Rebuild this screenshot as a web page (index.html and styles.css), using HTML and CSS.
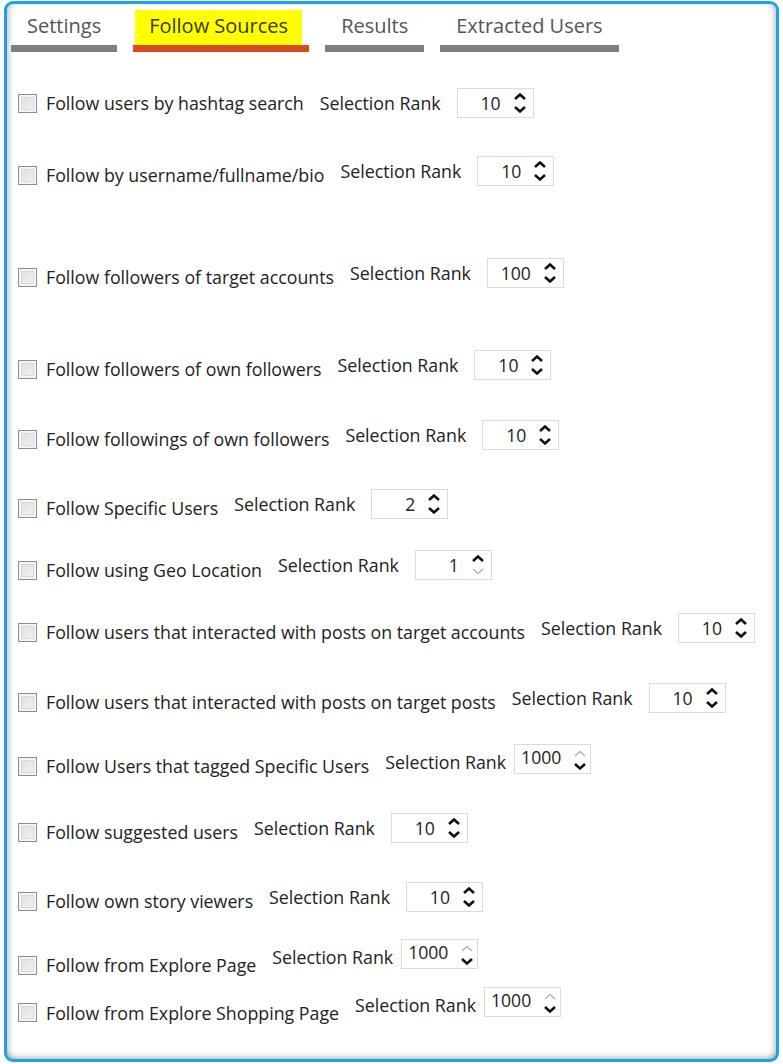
FILE: index.html
```html
<!DOCTYPE html>
<html>
<head>
<meta charset="utf-8">
<link rel="stylesheet" href="styles.css">
</head>
<body>
<div class="panel">
  <div class="tabs">
    <div class="tab"><span class="tab-text">Settings</span><span class="bar"></span></div>
    <div class="tab active"><span class="tab-text"><span class="hl">Follow Sources</span></span><span class="bar"></span></div>
    <div class="tab"><span class="tab-text">Results</span><span class="bar"></span></div>
    <div class="tab"><span class="tab-text">Extracted Users</span><span class="bar"></span></div>
  </div>
  <div class="rows">
    <div class="row"><div class="opt"><span class="cb"></span><span class="lbl">Follow users by hashtag search</span></div><span class="sr">Selection Rank</span><div class="spin"><span class="val">10</span><span class="arrows"><svg class="up" viewBox="0 0 12 7"><path d="M1 6L6 1.5L11 6"/></svg><svg class="dn" viewBox="0 0 12 7"><path d="M1 1L6 5.5L11 1"/></svg></span></div></div>
    <div class="row"><div class="opt"><span class="cb"></span><span class="lbl">Follow by username/fullname/bio</span></div><span class="sr">Selection Rank</span><div class="spin"><span class="val">10</span><span class="arrows"><svg class="up" viewBox="0 0 12 7"><path d="M1 6L6 1.5L11 6"/></svg><svg class="dn" viewBox="0 0 12 7"><path d="M1 1L6 5.5L11 1"/></svg></span></div></div>
    <div class="row"><div class="opt"><span class="cb"></span><span class="lbl">Follow followers of target accounts</span></div><span class="sr">Selection Rank</span><div class="spin"><span class="val">100</span><span class="arrows"><svg class="up" viewBox="0 0 12 7"><path d="M1 6L6 1.5L11 6"/></svg><svg class="dn" viewBox="0 0 12 7"><path d="M1 1L6 5.5L11 1"/></svg></span></div></div>
    <div class="row"><div class="opt"><span class="cb"></span><span class="lbl">Follow followers of own followers</span></div><span class="sr">Selection Rank</span><div class="spin"><span class="val">10</span><span class="arrows"><svg class="up" viewBox="0 0 12 7"><path d="M1 6L6 1.5L11 6"/></svg><svg class="dn" viewBox="0 0 12 7"><path d="M1 1L6 5.5L11 1"/></svg></span></div></div>
    <div class="row"><div class="opt"><span class="cb"></span><span class="lbl">Follow followings of own followers</span></div><span class="sr">Selection Rank</span><div class="spin"><span class="val">10</span><span class="arrows"><svg class="up" viewBox="0 0 12 7"><path d="M1 6L6 1.5L11 6"/></svg><svg class="dn" viewBox="0 0 12 7"><path d="M1 1L6 5.5L11 1"/></svg></span></div></div>
    <div class="row"><div class="opt"><span class="cb"></span><span class="lbl">Follow Specific Users</span></div><span class="sr">Selection Rank</span><div class="spin"><span class="val">2</span><span class="arrows"><svg class="up" viewBox="0 0 12 7"><path d="M1 6L6 1.5L11 6"/></svg><svg class="dn" viewBox="0 0 12 7"><path d="M1 1L6 5.5L11 1"/></svg></span></div></div>
    <div class="row"><div class="opt"><span class="cb"></span><span class="lbl">Follow using Geo Location</span></div><span class="sr">Selection Rank</span><div class="spin"><span class="val">1</span><span class="arrows"><svg class="up" viewBox="0 0 12 7"><path d="M1 6L6 1.5L11 6"/></svg><svg class="dn off" viewBox="0 0 12 7"><path d="M1 1L6 5.5L11 1"/></svg></span></div></div>
    <div class="row"><div class="opt"><span class="cb"></span><span class="lbl">Follow users that interacted with posts on target accounts</span></div><span class="sr">Selection Rank</span><div class="spin"><span class="val">10</span><span class="arrows"><svg class="up" viewBox="0 0 12 7"><path d="M1 6L6 1.5L11 6"/></svg><svg class="dn" viewBox="0 0 12 7"><path d="M1 1L6 5.5L11 1"/></svg></span></div></div>
    <div class="row"><div class="opt"><span class="cb"></span><span class="lbl">Follow users that interacted with posts on target posts</span></div><span class="sr">Selection Rank</span><div class="spin"><span class="val">10</span><span class="arrows"><svg class="up" viewBox="0 0 12 7"><path d="M1 6L6 1.5L11 6"/></svg><svg class="dn" viewBox="0 0 12 7"><path d="M1 1L6 5.5L11 1"/></svg></span></div></div>
    <div class="row wide"><div class="opt"><span class="cb"></span><span class="lbl">Follow Users that tagged Specific Users</span></div><span class="sr">Selection Rank</span><div class="spin"><span class="val">1000</span><span class="arrows"><svg class="up off" viewBox="0 0 12 7"><path d="M1 6L6 1.5L11 6"/></svg><svg class="dn" viewBox="0 0 12 7"><path d="M1 1L6 5.5L11 1"/></svg></span></div></div>
    <div class="row"><div class="opt"><span class="cb"></span><span class="lbl">Follow suggested users</span></div><span class="sr">Selection Rank</span><div class="spin"><span class="val">10</span><span class="arrows"><svg class="up" viewBox="0 0 12 7"><path d="M1 6L6 1.5L11 6"/></svg><svg class="dn" viewBox="0 0 12 7"><path d="M1 1L6 5.5L11 1"/></svg></span></div></div>
    <div class="row"><div class="opt"><span class="cb"></span><span class="lbl">Follow own story viewers</span></div><span class="sr">Selection Rank</span><div class="spin"><span class="val">10</span><span class="arrows"><svg class="up" viewBox="0 0 12 7"><path d="M1 6L6 1.5L11 6"/></svg><svg class="dn" viewBox="0 0 12 7"><path d="M1 1L6 5.5L11 1"/></svg></span></div></div>
    <div class="row wide"><div class="opt"><span class="cb"></span><span class="lbl">Follow from Explore Page</span></div><span class="sr">Selection Rank</span><div class="spin"><span class="val">1000</span><span class="arrows"><svg class="up off" viewBox="0 0 12 7"><path d="M1 6L6 1.5L11 6"/></svg><svg class="dn" viewBox="0 0 12 7"><path d="M1 1L6 5.5L11 1"/></svg></span></div></div>
    <div class="row wide"><div class="opt"><span class="cb"></span><span class="lbl">Follow from Explore Shopping Page</span></div><span class="sr">Selection Rank</span><div class="spin"><span class="val">1000</span><span class="arrows"><svg class="up off" viewBox="0 0 12 7"><path d="M1 6L6 1.5L11 6"/></svg><svg class="dn" viewBox="0 0 12 7"><path d="M1 1L6 5.5L11 1"/></svg></span></div></div>
  </div>
</div>
</body>
</html>
```

FILE: styles.css
```css
html, body {
  margin: 0;
  padding: 0;
  background: #ffffff;
}
body {
  font-family: "Open Sans", "Noto Sans", sans-serif;
  color: #2a2a2a;
}
.panel {
  box-sizing: border-box;
  margin: 1px 0 0 4px;
  width: 775px;
  height: 1061px;
  border: 3px solid #1ba3e6;
  border-radius: 9px;
  background: #ffffff;
  box-shadow: inset 5px 0 6px -3px rgba(0,0,0,0.22), inset -5px 0 6px -3px rgba(0,0,0,0.22), inset 0 -5px 6px -3px rgba(0,0,0,0.22);
  padding: 6px 0 0 4px;
}
.tabs {
  display: flex;
  gap: 16px;
}
.tab {
  display: flex;
  flex-direction: column;
}
.tab-text {
  height: 35px;
  display: flex;
  align-items: flex-start;
  justify-content: center;
  padding: 0 16px;
  font-size: 20px;
  line-height: 31px;
  color: #555555;
}
.tab.active .tab-text {
  padding: 0 7px 0 2px;
  color: #3a3a1a;
}
.hl {
  display: block;
  background: #ffff00;
  height: 35px;
  padding: 0 14px;
}
.bar {
  height: 7px;
  background: #7f7f7f;
}
.tab.active .bar {
  background: #d94a1c;
}
.rows {
  display: flex;
  flex-direction: column;
  padding-left: 7px;
}
.row {
  display: flex;
  align-items: center;
  height: 30px;
  font-size: 17.8px;
}
.opt {
  display: flex;
  align-items: center;
  gap: 9px;
  margin-top: 8px;
}
.cb {
  box-sizing: border-box;
  width: 19px;
  height: 19px;
  border: 1px solid #8e8e8e;
  background: linear-gradient(135deg, #dcdcdc, #f6f6f6);
  box-shadow: inset 0 0 0 2px #f4f4f4, inset 0 0 0 3px #d8d8d8;
}
.lbl {
  white-space: nowrap;
  color: #222;
}
.sr {
  margin-left: 16px;
  white-space: nowrap;
  color: #222;
}
.spin {
  box-sizing: border-box;
  margin-left: 16px;
  width: 77px;
  height: 30px;
  border: 1px solid #d7dce3;
  display: flex;
  align-items: center;
  justify-content: flex-end;
  padding-right: 7px;
  gap: 13px;
}
.val {
  color: #222;
  font-size: 17.6px;
}
.arrows {
  display: flex;
  flex-direction: column;
  gap: 6px;
}
.arrows svg {
  display: block;
  width: 12px;
  height: 7px;
  fill: none;
  stroke: #111;
  stroke-width: 2.6;
}
.arrows svg.off {
  stroke: #b5b5b5;
  stroke-width: 1.6;
}
.row.wide .spin {
  margin-left: 8px;
  justify-content: space-between;
  align-items: flex-start;
  padding: 0 7px 0 6px;
}
.row.wide .arrows {
  margin-top: 5px;
}
.row.wide .sr {
  margin-top: 6px;
}
.row:nth-child(1) { margin-top: 36px; }
.row:nth-child(1) .opt { margin-top: 0; }
.row:nth-child(2) { margin-top: 38px; }
.row:nth-child(3) { margin-top: 72px; }
.row:nth-child(4) { margin-top: 62px; }
.row:nth-child(5) { margin-top: 40px; }
.row:nth-child(6) { margin-top: 39px; }
.row:nth-child(7) { margin-top: 31px; }
.row:nth-child(7) .opt { margin-top: 10px; }
.row:nth-child(8) { margin-top: 33px; }
.row:nth-child(9) { margin-top: 40px; }
.row:nth-child(10) { margin-top: 31px; }
.row:nth-child(10) .opt { margin-top: 14px; }
.row:nth-child(11) { margin-top: 39px; }
.row:nth-child(12) { margin-top: 39px; }
.row:nth-child(13) { margin-top: 27px; }
.row:nth-child(13) .opt { margin-top: 22px; }
.row:nth-child(14) { margin-top: 18px; }
.row:nth-child(14) .opt { margin-top: 21px; }
```
